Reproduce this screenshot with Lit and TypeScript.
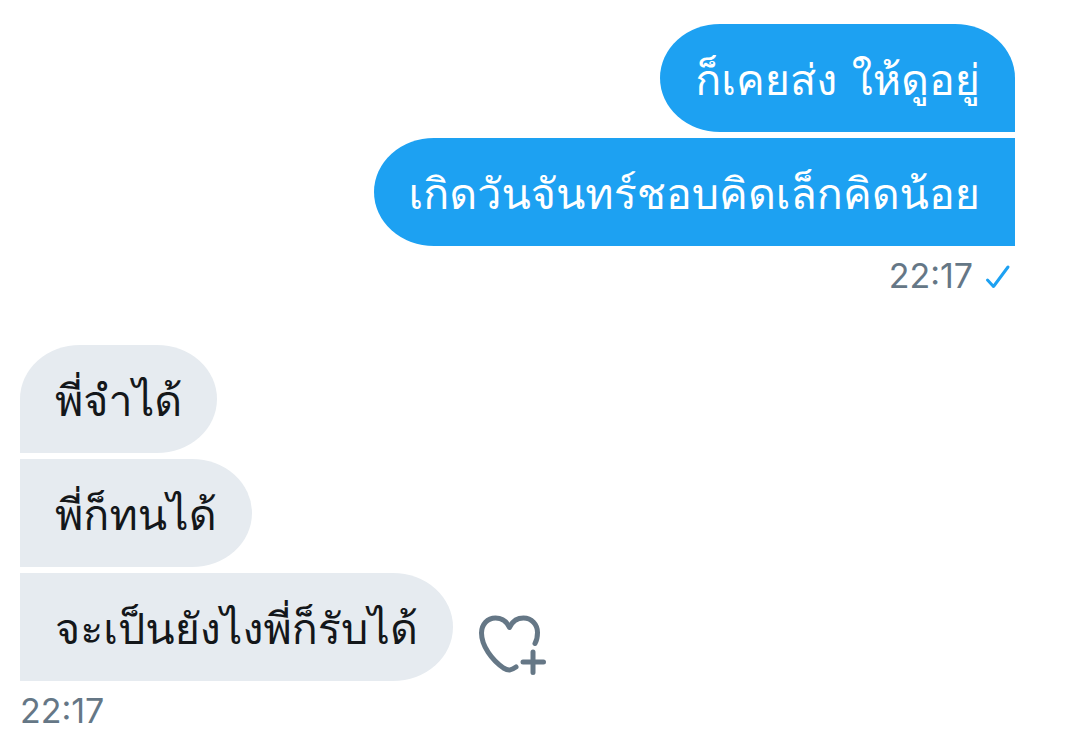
import { LitElement, html, css } from "lit";
import { customElement, property } from "lit/decorators.js";
import { classMap } from "lit/directives/class-map.js";

@customElement("chat-bubble")
class ChatBubble extends LitElement {
  @property({ type: Boolean }) sent = false;
  @property({ type: Boolean }) first = false;

  static styles = css`
    :host {
      display: block;
      max-width: 100%;
    }
    .bubble {
      margin: 0;
      padding: 26px 35px 22px;
      font-family: Loma, "Noto Sans Thai", "Noto Sans", sans-serif;
      font-size: 43px;
      line-height: 60px;
      color: #14171a;
      background: #e6ebf0;
      border-radius: 0 60px 60px 0 / 0 54px 54px 0;
    }
    .sent {
      color: #fff;
      background: #1da1f2;
      border-radius: 60px 0 0 60px / 54px 0 0 54px;
    }
    .first {
      border-radius: 60px 60px 60px 0 / 54px 54px 54px 0;
    }
    .first:not(.sent) {
      border-radius: 60px 60px 60px 0 / 54px 54px 54px 0;
    }
    .sent.first {
      border-radius: 60px 60px 0 60px / 54px 54px 0 54px;
    }
  `;

  render() {
    return html`<p class=${classMap({ bubble: true, sent: this.sent, first: this.first })}><slot></slot></p>`;
  }
}

@customElement("app-root")
class AppRoot extends LitElement {
  static styles = css`
    :host {
      display: block;
      background: #fff;
      font-family: Inter, "Liberation Sans", sans-serif;
    }
    .thread {
      display: flex;
      flex-direction: column;
      gap: 45px;
      padding: 24px 59px 0 20px;
    }
    .group {
      display: flex;
      flex-direction: column;
      align-items: flex-start;
      gap: 6px;
    }
    .group.sent {
      align-items: flex-end;
    }
    .row {
      display: flex;
      align-items: flex-end;
      gap: 24px;
    }
    .meta {
      display: flex;
      align-items: center;
      gap: 12px;
      padding-right: 4px;
      color: #657786;
      font-size: 34px;
      line-height: 48px;
    }
    .check {
      display: block;
      width: 26px;
      height: 26px;
    }
    .react {
      display: block;
      padding: 0;
      border: 0;
      background: none;
      cursor: pointer;
    }
    .heart {
      display: block;
      width: 72px;
      height: 72px;
    }
  `;

  render() {
    return html`
      <main class="thread">
        <section class="group sent">
          <chat-bubble sent first>ก็เคยส่ง ให้ดูอยู่</chat-bubble>
          <chat-bubble sent>เกิดวันจันทร์ชอบคิดเล็กคิดน้อย</chat-bubble>
          <div class="meta">
            <time>22:17</time>
            <svg class="check" viewBox="0 0 26 26" fill="none" stroke="#1da1f2" stroke-width="3" stroke-linecap="round" stroke-linejoin="round" role="img" aria-label="ส่งแล้ว">
              <path d="M2.500 17 L8.500 23.500 L23 4" />
            </svg>
          </div>
        </section>
        <section class="group">
          <chat-bubble first>พี่จำได้</chat-bubble>
          <chat-bubble>พี่ก็ทนได้</chat-bubble>
          <div class="row">
            <chat-bubble>จะเป็นยังไงพี่ก็รับได้</chat-bubble>
            <button class="react" aria-label="เพิ่มรีแอ็กชัน">
              <svg class="heart" viewBox="477 609 72 72" fill="none" stroke="#657786" stroke-width="5" stroke-linecap="round" stroke-linejoin="round">
                <path d="M535 643.500 C537 640 537.500 636 537.500 632.500 C537.500 624.500 531.500 618 523.500 618 C517 618 512 622 509.500 627.500 C507 622 502 618 495.500 618 C487.500 618 481.500 624.500 481.500 633 C481.500 646 492 660 503.500 668 C508.500 671 511 670.500 516 667" />
                <path d="M533 652 V672.500 M523 662 H543.500" />
              </svg>
            </button>
          </div>
          <div class="meta"><time>22:17</time></div>
        </section>
      </main>
    `;
  }
}
